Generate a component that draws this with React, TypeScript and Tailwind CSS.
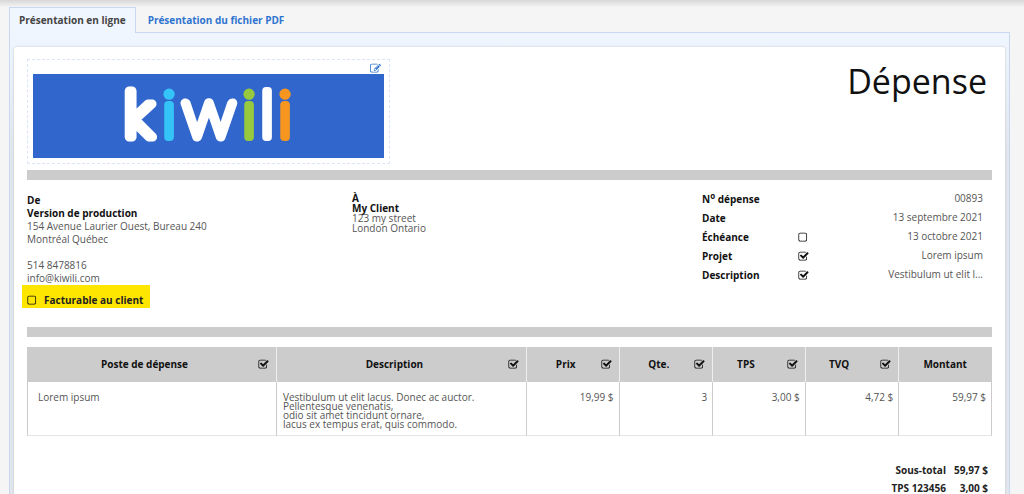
import { useState, type ReactNode } from 'react';

const CHECKED_PATH =
  'M1472 930v318q0 119-84.5 203.5t-203.5 84.5h-832q-119 0-203.5-84.5t-84.5-203.5v-832q0-119 84.5-203.5t203.5-84.5h832q63 0 117 25 15 7 18 23 3 17-9 29l-49 49q-10 10-23 10-3 0-9-2-23-6-45-6h-832q-66 0-113 47t-47 113v832q0 66 47 113t113 47h832q66 0 113-47t47-113v-254q0-13 9-22l64-64q10-10 23-10 6 0 12 3 20 8 20 29zm231-489l-814 814q-24 24-57 24t-57-24l-430-430q-24-24-24-57t24-57l110-110q24-24 57-24t57 24l263 263 647-647q24-24 57-24t57 24l110 110q24 24 24 57t-24 57z';
const EMPTY_PATH =
  'M1184 256h-832q-66 0-113 47t-47 113v832q0 66 47 113t113 47h832q66 0 113-47t47-113v-832q0-66-47-113t-113-47zm288 160v832q0 119-84.5 203.5t-203.5 84.5h-832q-119 0-203.5-84.5t-84.5-203.5v-832q0-119 84.5-203.5t203.5-84.5h832q119 0 203.5 84.5t84.5 203.5z';
const EDIT_PATH =
  'M888 1184l116-116-152-152-116 116v56h96v96h56zm440-720q-16-16-33 1l-350 350q-17 17-1 33t33-1l350-350q17-17 1-33zm80 594v190q0 119-84.5 203.5t-203.5 84.5h-832q-119 0-203.5-84.5t-84.5-203.5v-832q0-119 84.5-203.5t203.5-84.5h832q63 0 117 25 15 7 18 23 3 17-9 29l-49 49q-14 14-32 8-23-6-45-6h-832q-66 0-113 47t-47 113v832q0 66 47 113t113 47h832q66 0 113-47t47-113v-126q0-13 9-22l64-64q15-15 35-7t20 29zm-96-738l288 288-672 672h-288v-288zm444 132l-92 92-288-288 92-92q28-28 68-28t68 28l152 152q28 28 28 68t-28 68z';

function Tick({ id, label, initial = false }: { id: string; label?: string; initial?: boolean }) {
  const [on, setOn] = useState(initial);
  return (
    <span className="relative inline-block size-[11px] shrink-0 text-[#111]">
      <input
        id={id}
        type="checkbox"
        aria-label={label}
        checked={on}
        onChange={(e) => setOn(e.target.checked)}
        className="absolute inset-0 size-[11px] cursor-pointer appearance-none"
      />
      <svg viewBox="0 0 1792 1792" className="pointer-events-none block size-[11px]" fill="currentColor" aria-hidden="true">
        <path d={on ? CHECKED_PATH : EMPTY_PATH} />
      </svg>
    </span>
  );
}

function Logo() {
  return (
    <svg viewBox="0 0 351 84" className="block w-full bg-[#3166cc]" role="img" aria-label="kiwili">
      <text
        y="63"
        textAnchor="middle"
        fontFamily="Roboto, sans-serif"
        fontWeight="100"
        fontSize="61"
        strokeWidth="8"
        strokeLinejoin="round"
        strokeLinecap="round"
      >
        <tspan x="104" fontSize="60" fontFamily="'DejaVu Sans', sans-serif" fontWeight="200" strokeWidth="9" fill="#fff" stroke="#fff">k</tspan>
        <tspan x="136" fill="#35c4f7" stroke="#35c4f7">i</tspan>
        <tspan x="176" fontSize="70" fontFamily="Lato, sans-serif" fontWeight="100" strokeWidth="9" fill="#fff" stroke="#fff">w</tspan>
        <tspan x="216" fill="#96c93d" stroke="#96c93d">i</tspan>
        <tspan x="234" fill="#fff" stroke="#fff">l</tspan>
        <tspan x="252" fill="#f7961f" stroke="#f7961f">i</tspan>
      </text>
      <circle cx="136" cy="20" r="4" fill="#35c4f7" />
      <circle cx="216" cy="20" r="4" fill="#96c93d" />
      <circle cx="252" cy="20" r="4" fill="#f7961f" />
    </svg>
  );
}

function MetaRow({ label, value, tick }: { label: ReactNode; value: string; tick?: ReactNode }) {
  return (
    <div className="grid h-[19px] grid-cols-[96px_24px_1fr] items-center">
      <dt className="font-bold text-[#111]">{label}</dt>
      <dd className="flex">{tick}</dd>
      <dd className="pb-[3px] text-right">{value}</dd>
    </div>
  );
}

const columns = [
  { name: 'Poste de dépense', width: 'w-[25.9%]', pad: 'pl-1', tick: true },
  { name: 'Description', width: 'w-[25.9%]', pad: 'pl-1', tick: true },
  { name: 'Prix', width: 'w-[9.6%]', pad: 'pl-1', tick: true },
  { name: 'Qte.', width: 'w-[9.7%]', pad: 'pl-1', tick: true },
  { name: 'TPS', width: 'w-[9.6%]', pad: 'pr-2', tick: true },
  { name: 'TVQ', width: 'w-[9.7%]', pad: 'pr-2', tick: true },
  { name: 'Montant', width: 'w-[9.6%]', pad: 'pr-0', tick: false },
];

const amounts = ['19,99 $', '3', '3,00 $', '4,72 $', '59,97 $'];

export default function App() {
  return (
    <div className="h-screen overflow-hidden bg-[#f5f5f5] font-['Open_Sans','Noto_Sans',sans-serif] text-[10px] leading-[13px] text-[#555]">
      <div className="h-[7px] bg-linear-to-b from-[#d8d8d8] to-[#f3f3f3]" />
      <main className="pr-[14px] pl-[9px]">
        <div role="tablist" className="relative z-10 -mb-px flex h-[26px] font-bold">
          <button
            role="tab"
            aria-selected="true"
            className="border border-b-0 border-[#c8d8f3] bg-[#eff6ff] px-[9px] text-[#444]"
          >
            Présentation en ligne
          </button>
          <button role="tab" aria-selected="false" className="px-3 text-[#2f74d0]">
            Présentation du fichier PDF
          </button>
        </div>

        <div className="border border-[#c8d8f3] bg-linear-to-b from-[#eff6ff] to-[#e1e6ec] to-[120px] px-1 pt-[14px]">
          <article className="min-h-screen rounded-t-xs bg-white px-[13px] pt-3 shadow-[0_0_2px_#bbb]">
            <header className="flex items-start justify-between">
              <div className="w-[363px] border border-dashed border-[#dbe5f5] px-[5px] pb-[5px]">
                <div className="flex h-[14px] items-center justify-end pt-[2px] pr-[3px]">
                  <button aria-label="Modifier le logo" className="text-[#2f74d0]">
                    <svg viewBox="0 0 1792 1792" className="block size-[11px]" fill="currentColor" aria-hidden="true">
                      <path d={EDIT_PATH} />
                    </svg>
                  </button>
                </div>
                <Logo />
              </div>
              <h1 className="pr-[5px] text-[34px] leading-[44px] text-[#111]">Dépense</h1>
            </header>

            <div className="mt-[6px] h-[10px] bg-[#ccc]" />

            <section className="flex h-[147px] items-start pt-[14px]">
              <div className="w-[325px] shrink-0">
                <p className="font-bold text-[#111]">De</p>
                <p className="font-bold text-[#111]">Version de production</p>
                <p>154 Avenue Laurier Ouest, Bureau 240</p>
                <p>Montréal Québec</p>
                <p className="mt-[13px]">514 8478816</p>
                <p>info@kiwili.com</p>
                <div className="-ml-[5px] flex h-[23px] w-[128px] items-center bg-[#ffe600] pt-2 pl-[5px]">
                  <Tick id="billable" />
                  <label htmlFor="billable" className="pl-[6px] font-bold whitespace-nowrap text-[#222]">
                    Facturable au client
                  </label>
                </div>
              </div>
              <div className="-mt-px leading-[10px]">
                <p className="font-bold text-[#111]">À</p>
                <p className="font-bold text-[#111]">My Client</p>
                <p>123 my street</p>
                <p>London Ontario</p>
              </div>
              <dl className="-mt-1 ml-auto w-[290px] pr-[9px]">
                <MetaRow
                  label={<>N<sup className="top-[-4px] text-[8px] leading-none">o</sup> dépense</>}
                  value="00893"
                />
                <MetaRow label="Date" value="13 septembre 2021" />
                <MetaRow label="Échéance" value="13 octobre 2021" tick={<Tick id="due" label="Échéance" />} />
                <MetaRow label="Projet" value="Lorem ipsum" tick={<Tick id="project" label="Projet" initial />} />
                <MetaRow
                  label="Description"
                  value="Vestibulum ut elit l..."
                  tick={<Tick id="desc" label="Description" initial />}
                />
              </dl>
            </section>

            <div className="h-[10px] bg-[#ccc]" />

            <table className="mt-[10px] w-full table-fixed border-separate border-spacing-0">
              <thead>
                <tr className="h-[35px] bg-[#ccc] text-[#111]">
                  {columns.map((c) => (
                    <th
                      key={c.name}
                      scope="col"
                      className={`${c.width} border-r border-[#eee] pr-[7px] pb-0 pl-0 last:border-[#ccc] last:pr-0`}
                    >
                      <span className="flex items-center">
                        <span className={`${c.pad} grow text-center`}>{c.name}</span>
                        {c.tick && <Tick id={`col-${c.name}`} label={c.name} initial />}
                      </span>
                    </th>
                  ))}
                </tr>
              </thead>
              <tbody>
                <tr className="h-[54px] align-top">
                  <td className="border-x border-b border-r-[#ccc] border-b-[#e5e5e5] border-l-[#ccc] pt-[9px] pl-[10px]">
                    Lorem ipsum
                  </td>
                  <td className="border-r border-b border-r-[#ccc] border-b-[#e5e5e5] px-[6px] pt-[11px] leading-[9px]">
                    Vestibulum ut elit lacus. Donec ac auctor.
                    <br />
                    Pellentesque venenatis,
                    <br />
                    odio sit amet tincidunt ornare,
                    <br />
                    lacus ex tempus erat, quis commodo.
                  </td>
                  {amounts.map((a) => (
                    <td
                      key={a}
                      className="border-r border-b border-r-[#ccc] border-b-[#e5e5e5] pt-[9px] pr-[5px] text-right"
                    >
                      {a}
                    </td>
                  ))}
                </tr>
              </tbody>
            </table>

            <dl className="mt-[25px] ml-auto grid w-fit grid-cols-[auto_auto] gap-x-2 pr-1 text-right leading-[18px] font-bold text-[#222]">
              <dt>Sous-total</dt>
              <dd>59,97 $</dd>
              <dt>TPS 123456</dt>
              <dd>3,00 $</dd>
            </dl>
          </article>
        </div>
      </main>
    </div>
  );
}
